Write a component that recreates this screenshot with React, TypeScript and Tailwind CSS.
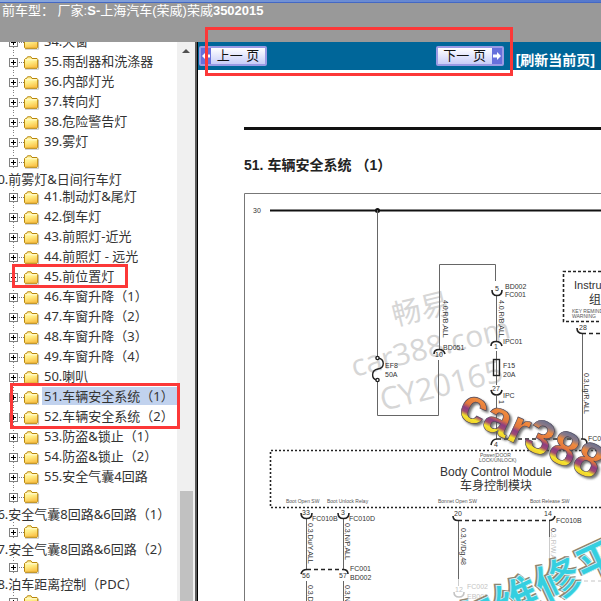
import { FC, ReactNode } from "react";

interface TreeItem {
  label?: string;
  // text that wrapped under an empty node
  wrapped?: string;
  selected?: boolean;
  mark?: "single" | "double";
}

const items: TreeItem[] = [
  { label: "34.天窗" },
  { label: "35.雨刮器和洗涤器" },
  { label: "36.内部灯光" },
  { label: "37.转向灯" },
  { label: "38.危险警告灯" },
  { label: "39.雾灯" },
  { wrapped: "40.前雾灯&日间行车灯" },
  { label: "41.制动灯&尾灯" },
  { label: "42.倒车灯" },
  { label: "43.前照灯-近光" },
  { label: "44.前照灯 - 远光" },
  { label: "45.前位置灯", mark: "single" },
  { label: "46.车窗升降（1）" },
  { label: "47.车窗升降（2）" },
  { label: "48.车窗升降（3）" },
  { label: "49.车窗升降（4）" },
  { label: "50.喇叭" },
  { label: "51.车辆安全系统（1）", selected: true, mark: "double" },
  { label: "52.车辆安全系统（2）" },
  { label: "53.防盗&锁止（1）" },
  { label: "54.防盗&锁止（2）" },
  { label: "55.安全气囊4回路" },
  { wrapped: "56.安全气囊8回路&6回路（1）" },
  { wrapped: "57.安全气囊8回路&6回路（2）" },
  { wrapped: "58.泊车距离控制（PDC）" },
  {},
];

const Expander = () => (
  <button type="button" aria-label="展开" className="h-full w-6 shrink-0 overflow-hidden">
    <svg width="24" height="20" viewBox="0 0 24 20" shapeRendering="crispEdges">
      <path d="M13.5 0V20" stroke="#808080" strokeDasharray="1 2" />
      <path d="M19 10.5H24" stroke="#808080" strokeDasharray="1 1" />
      <rect x="9.5" y="6.5" width="8" height="8" fill="#fff" stroke="#808080" />
      <path d="M11 10.5H16M13.5 8V13" stroke="#000" />
    </svg>
  </button>
);

const Folder = () => (
  <svg width="16" height="14" viewBox="0 0 16 14" className="mt-[2px] shrink-0">
    <path d="M1 13.2H14.6V4" fill="none" stroke="#999" strokeOpacity=".6" />
    <path
      d="M.5 11.5V3.5L1.5 2.5H2.5L3.5 .8H7L8 2.5H13L13.7 3.3V11.5L13 12.3H1.2Z"
      fill="url(#folder)"
      stroke="#b8860b"
    />
    <path d="M1.5 3.8H12.8" stroke="#fffbd8" />
  </svg>
);

const TreeRow: FC<TreeItem> = ({ label, wrapped, selected, mark }) => (
  <li className="relative">
    <div className={label ? "flex h-5 items-center" : "flex h-[18px] items-center"}>
      <Expander />
      <Folder />
      {label && (
        <a
          href="#"
          className={
            selected
              ? "ml-[2px] h-[18px] flex-1 self-start bg-[#c1d2ee] px-[2px] leading-[18px]"
              : "ml-[2px] h-[18px] self-start px-[2px] leading-[18px]"
          }
        >
          {label}
        </a>
      )}
    </div>
    {wrapped && (
      <a href="#" className="-ml-[10px] block h-[17px] leading-[18px]">
        {wrapped}
      </a>
    )}
    {mark === "single" && (
      <span className="pointer-events-none absolute -top-[3px] left-3 z-10 h-6 w-[116px] border-3 border-[#fc3838]" />
    )}
    {mark === "double" && (
      <span className="pointer-events-none absolute -top-1 left-[10px] z-10 h-[46px] w-[170px] border-3 border-[#fc3838]" />
    )}
  </li>
);

const Sidebar = () => (
  <aside className="flex w-[198px] shrink-0 overflow-hidden border-r border-black">
    <svg width="0" height="0" className="absolute">
      <linearGradient id="folder" x1="0" y1="0" x2="0.3" y2="1">
        <stop offset="0" stopColor="#fff3a8" />
        <stop offset=".5" stopColor="#fff08a" />
        <stop offset="1" stopColor="#fbc44a" />
      </linearGradient>
    </svg>
    <ul className="-mt-[10px] min-w-0 flex-1 font-['Noto_Sans','Noto_Sans_CJK_SC',sans-serif] text-[13px] whitespace-nowrap text-[#333]">
      {items.map((item, index) => (
        <TreeRow key={index} {...item} />
      ))}
    </ul>
    {/* scrollbar */}
    <div className="flex w-[18px] flex-col items-center bg-[#f0f0f0]">
      <svg width="8" height="4" viewBox="0 0 8 4" className="mt-[7px]">
        <path d="M0 4L4 0L8 4Z" fill="#505050" />
      </svg>
      <div className="mt-auto h-[110px] w-[13px] bg-[#c1c1c1]" />
    </div>
    <div className="w-[2px] bg-[#5a5a5a]" />
  </aside>
);

interface PageButtonProps {
  children: ReactNode;
  side: "left" | "right";
}

const PageButton: FC<PageButtonProps> = ({ children, side }) => (
  <button
    type="button"
    className={
      side === "left"
        ? "flex h-5 w-[68px] items-stretch overflow-hidden rounded-[2px] border-2 border-[#9a9ae4] bg-linear-to-b from-white to-[#c8cdf8] text-[#111]"
        : "flex h-5 w-[68px] flex-row-reverse items-stretch overflow-hidden rounded-[2px] border-2 border-[#9a9ae4] bg-linear-to-b from-white to-[#c8cdf8] text-[#111]"
    }
  >
    <span className="flex w-[10px] items-center justify-center bg-[#6670dc]">
      <svg width="8" height="8" viewBox="0 0 8 8" fill="#fff">
        {side === "left" ? <path d="M0 4L4 0V2.5H8V5.5H4V8Z" /> : <path d="M8 4L4 0V2.5H0V5.5H4V8Z" />}
      </svg>
    </span>
    <span className="flex-1 text-center text-[13px] leading-4">{children}</span>
  </button>
);

const Toolbar = () => (
  <nav className="relative flex h-7 items-center justify-between bg-[#006699] pr-[6px] pl-px font-['Liberation_Sans','Noto_Sans_CJK_SC',sans-serif]">
    <PageButton side="left">上一 页</PageButton>
    <div className="flex items-center gap-3">
      <PageButton side="right">下一 页</PageButton>
      <a href="#" className="pt-2 text-sm leading-5 font-bold whitespace-nowrap text-white">
        [刷新当前页]
      </a>
    </div>
    <span className="pointer-events-none absolute -top-[15px] right-[88px] left-[7px] h-[49px] border-3 border-[#fc3838]" />
  </nav>
);

interface WireLabelProps {
  x: number;
  y: number;
  children: ReactNode;
}

const WireLabel: FC<WireLabelProps> = ({ x, y, children }) => (
  <text transform={`translate(${x} ${y}) rotate(90)`}>{children}</text>
);

const Diagram = () => (
  <svg
    width="357"
    height="420"
    viewBox="244 190 357 420"
    className="block"
    fontFamily="'Liberation Sans','Noto Sans CJK SC',sans-serif"
    fontSize="7"
    fill="#333"
  >
    <defs>
      <linearGradient id="rainbow" gradientUnits="userSpaceOnUse" x1="0" y1="-36" x2="0" y2="2">
        <stop offset="0" stopColor="#5a6c92" />
        <stop offset=".2" stopColor="#8d7a86" />
        <stop offset=".32" stopColor="#f08a3c" />
        <stop offset=".52" stopColor="#e0763c" />
        <stop offset=".64" stopColor="#8c3c82" />
        <stop offset=".74" stopColor="#a04c70" />
        <stop offset=".84" stopColor="#f4e62c" />
        <stop offset="1" stopColor="#f0c030" />
      </linearGradient>
      <filter id="shade" x="-10%" y="-20%" width="120%" height="150%">
        <feDropShadow dx="2" dy="2" stdDeviation="1" floodColor="#555" floodOpacity=".8" />
      </filter>
    </defs>

    {/* frame and supply rail */}
    <path d="M244.5 610V193.5H601" fill="none" stroke="#777" />
    <text x="253" y="213">30</text>
    <path d="M270 210.5H601" stroke="#111" strokeWidth="2" />
    <circle cx="377.5" cy="210.5" r="2.5" fill="#111" />

    {/* grey watermark */}
    <g fill="#d6d6d6" fontFamily="'Open Sans','Noto Sans CJK SC',sans-serif">
      <text fontSize="29" transform="translate(395 326) rotate(-14)">畅易</text>
      <text fontSize="30" transform="translate(354 377) rotate(-14)">car388.com</text>
      <text fontSize="31" transform="translate(383 411) rotate(-14)">CY20165</text>
    </g>

    {/* wires */}
    <g fill="none" stroke="#666">
      <path d="M377.5 210V356M377.5 382V415.5H438.5V360M439.5 349V264.5H495.5V281" />
      <path d="M496.5 296V341M496.5 351V385M496.5 396V439" />
      <path d="M582.5 333V439" />
      <path d="M306.5 519V569M343.5 519V569M306.5 581V610M343.5 581V610" />
      <path d="M458.5 521V579M549.5 521V537" />
      <path d="M458.5 579V586M549.5 537V580" stroke="#ccc" />
    </g>

    {/* fuses */}
    <g fill="none" stroke="#222" strokeWidth="1.4">
      <path d="M378 358C385 359 385 368 378 369C371 370 371 379 377 380" />
      <circle cx="377.5" cy="358" r="1.6" fill="#fff" />
      <circle cx="377.5" cy="380" r="1.6" fill="#fff" />
      <rect x="493.5" y="359.5" width="6" height="16" />
    </g>

    {/* connectors */}
    <g fill="none" stroke="#222" strokeWidth="1.6">
      <path d="M434 354Q434 349.500 439 349.500Q444 349.500 445 354" />
      <path d="M492 290Q492 295.500 497 295.500Q502 295.500 502 290" />
      <path d="M491 346Q491 341.500 496 341.500Q501 341.500 502 346" />
      <path d="M491 390Q492 395 496.500 395Q501 395 502 390" />
      <path d="M577 328Q577 333 582 333.500" />
      <path d="M491 445Q492 439 497 439M583 439Q587 439 587 444" />
      <path d="M301 513Q301 518.500 306.500 518.500Q312 518.500 312 513" />
      <path d="M338 513Q338 518.500 343.500 518.500Q349 518.500 349 513" />
      <path d="M301 574Q302 569.500 307 569.500M343 569.500Q348 569.500 348 574" />
      <path d="M453 516Q453 520.500 458 520.500M549 520.500Q554 520.500 555 516" />
      <path d="M454 592Q454 597 459 597Q464 597 464 592" stroke="#c4c4c4" />
      <g strokeDasharray="4 3">
        <path d="M582 333.500H601M497 439H583M307 569.500H343M458 520.500H549" />
        <path d="M570 581H601" stroke="#c4c4c4" strokeWidth="1" />
      </g>
    </g>

    {/* modules */}
    <g fill="none" stroke="#222" strokeWidth="1.6">
      <path d="M601 271.500H563.500V321.500H601" strokeDasharray="3 2" />
      <path d="M601 450.500H270.500V507.500H601" strokeDasharray="2 2" />
    </g>
    <text x="574" y="289" fontSize="11">Instrument</text>
    <text x="589" y="304" fontSize="12">组合仪表</text>
    <g fontSize="5" fill="#555">
      <text x="572" y="313">KEY REMINDER</text>
      <text x="572" y="318">WARNING</text>
      <text x="480" y="457">Power(DOOR</text>
      <text x="479" y="462">LOCK/UNLOCK)</text>
      <text x="286" y="503">Boot Open SW</text>
      <text x="327" y="503">Boot Unlock Relay</text>
      <text x="438" y="503">Bonnet Open SW</text>
      <text x="530" y="503">Boot Release SW</text>
    </g>
    <g fontSize="12" textAnchor="middle">
      <text x="496" y="476">Body Control Module</text>
      <text x="496" y="490">车身控制模块</text>
    </g>

    {/* part names */}
    <text x="385" y="368">EF8</text>
    <text x="385" y="377">50A</text>
    <text x="443" y="350">BD051</text>
    <text x="505" y="289">BD002</text>
    <text x="505" y="297">FC001</text>
    <text x="503" y="344">IPC01</text>
    <text x="503" y="368">F15</text>
    <text x="503" y="377">20A</text>
    <text x="503" y="398">IPC</text>
    <text x="588" y="441">FC010</text>
    <text x="312" y="521">FC010B</text>
    <text x="349" y="521">FC010D</text>
    <text x="350" y="571">FC001</text>
    <text x="350" y="580">BD002</text>
    <text x="556" y="523">FC010B</text>

    {/* pin numbers */}
    <g textAnchor="middle">
      <text x="439" y="357">10</text>
      <text x="497" y="291">5</text>
      <text x="496" y="349">1</text>
      <text x="496" y="391">27</text>
      <text x="583" y="330">28</text>
      <text x="496" y="447">4</text>
      <text x="306" y="515">33</text>
      <text x="343" y="515">3</text>
      <text x="306" y="578">56</text>
      <text x="343" y="578">57</text>
      <text x="458" y="516">20</text>
      <text x="548" y="516">14</text>
    </g>

    {/* wire colours */}
    <WireLabel x={443} y={300}>4.0,R/B,ALL</WireLabel>
    <WireLabel x={499} y={300}>4.0,R/B,ALL</WireLabel>
    <WireLabel x={499} y={400}>1</WireLabel>
    <WireLabel x={584} y={373}>0.3,Lg/R,ALL</WireLabel>
    <WireLabel x={308} y={523}>0.3,Du/Y,ALL</WireLabel>
    <WireLabel x={345} y={523}>0.3,N/P,ALL</WireLabel>
    <WireLabel x={308} y={585}>0.3,Du/Y,ALL</WireLabel>
    <WireLabel x={345} y={585}>0.3,N/P,ALL</WireLabel>
    <WireLabel x={461} y={528}>0.3,Y/Dg,48</WireLabel>
    <WireLabel x={551} y={528}>
      0.<tspan fill="#c4c4c4">3,R/W,ALL</tspan>
    </WireLabel>
    <g fill="#c4c4c4">
      <text x="455" y="592">12</text>
      <text x="467" y="589">FC002</text>
      <text x="467" y="599">EB001</text>
    </g>

    {/* coloured stamps */}
    <g filter="url(#shade)">
      <text
        transform="translate(456 416) rotate(25)"
        fontSize="48"
        fontWeight="bold"
        fill="url(#rainbow)"
        stroke="#4a4458"
        strokeWidth=".6"
      >
        car388
      </text>
    </g>
    <g transform="translate(558 580) rotate(-25)" fontSize="45" fontWeight="bold" textAnchor="middle">
      <text x="-1" y="16" fill="#8d8672" stroke="#8d8672" strokeWidth="2">
        车维修平台
      </text>
      <text x="0" y="17" fill="#35cfe0" stroke="#e8fbfb" strokeWidth=".6">
        车维修平台
      </text>
    </g>
  </svg>
);

export default function App() {
  return (
    <div className="flex h-screen flex-col overflow-hidden bg-white">
      <header className="h-[42px] shrink-0 bg-[#999] font-['Liberation_Sans','Noto_Sans_CJK_SC',sans-serif] text-[13px] whitespace-nowrap text-white">
        <div className="h-[3px] border-b border-[#4468c4] bg-linear-to-r from-[#8ba8dc] to-[#5578cc]" />
        <p className="pl-[2px] leading-4">
          前车型： 厂家:<b>S-</b>上海汽车(荣威)荣威<b>3502015</b>
        </p>
      </header>
      <div className="flex min-h-0 flex-1">
        <Sidebar />
        <main className="min-w-0 flex-1">
          <Toolbar />
          <div className="overflow-hidden pt-[57px] pl-[46px]">
            <hr className="border-t-3 border-[#111]" />
            <h1 className="mt-[25px] mb-[15px] flex gap-1 font-['Liberation_Sans','Noto_Sans_CJK_SC',sans-serif] text-sm leading-5 font-bold text-[#222]">
              <span>51.</span>
              <span>车辆安全系统</span>
              <span>（1）</span>
            </h1>
            <Diagram />
          </div>
        </main>
      </div>
    </div>
  );
}
